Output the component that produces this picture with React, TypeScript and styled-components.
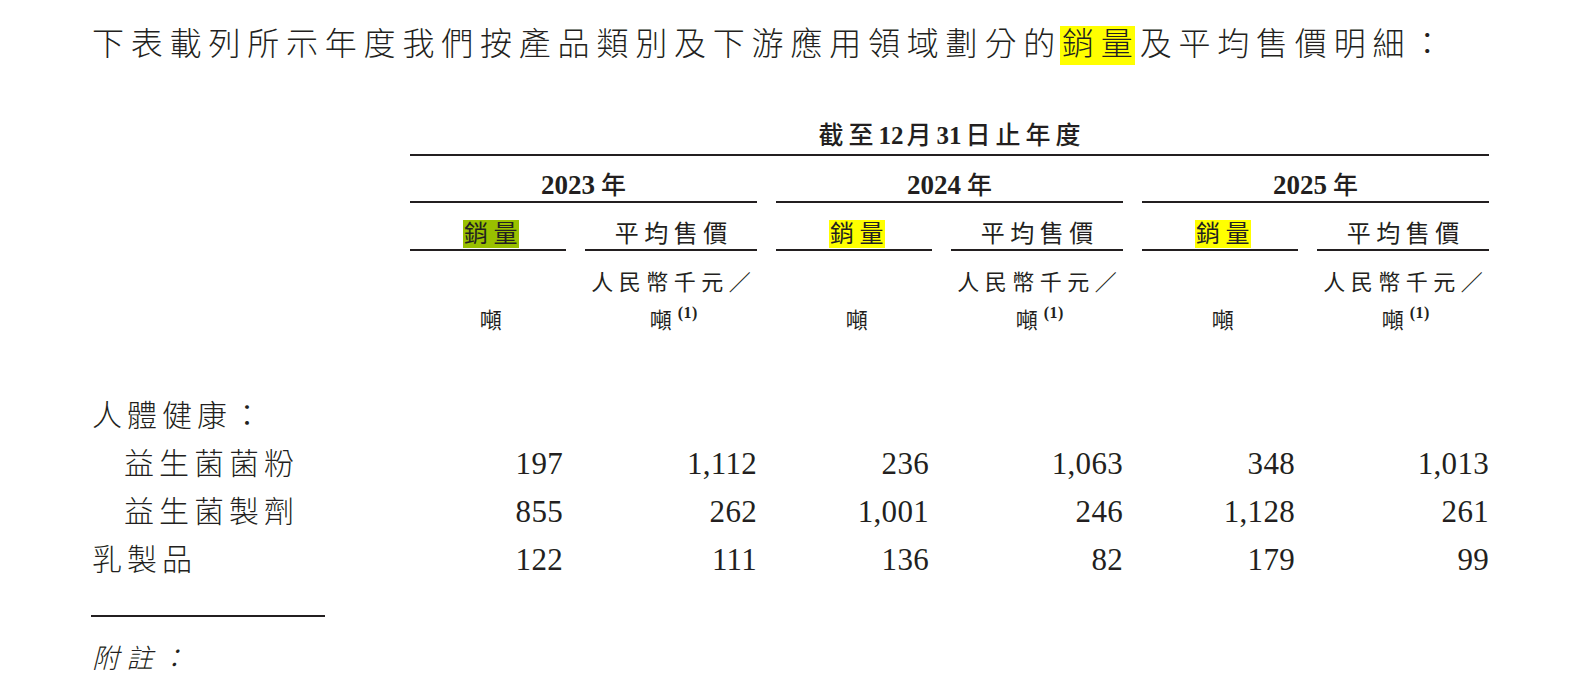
import React from "react";
import styled, { createGlobalStyle } from "styled-components";

const Global = createGlobalStyle`
  html, body { margin: 0; padding: 0; background: #ffffff; }
  body { font-family: "Liberation Serif", "Noto Sans CJK TC", serif; color: #231f20; }
`;

const Page = styled.div`
  padding: 24px 0 0 92px;
  font-family: "Liberation Serif", "Noto Sans CJK TC", serif;
  color: #231f20;
`;

const Intro = styled.p`
  margin: 0;
  font-size: 32px;
  line-height: 40px;
  letter-spacing: 6.8px;
  font-weight: 300;
  white-space: nowrap;
`;

const Mark = styled.span<{ $color: string; $gap: number }>`
  background: ${(p) => p.$color};
  padding: 0 2px 3px 2px;
  margin: 0 ${(p) => p.$gap - 2}px 0 -2px;
`;

const Tight = styled.span`
  letter-spacing: 0;
`;

const Bold = styled.span<{ $size: number; $after: number }>`
  font-weight: 700;
  font-size: ${(p) => p.$size}px;
  letter-spacing: 0;
  margin-right: ${(p) => p.$after}px;
`;

const Table = styled.div`
  display: grid;
  grid-template-columns: 299px 156px 172px 156px 172px 156px 172px;
  column-gap: 19px;
  margin-top: 57px;
`;

const SpanHead = styled.div`
  grid-column: 2 / 8;
  text-align: center;
  font-size: 25px;
  font-weight: 500;
  line-height: 30px;
  letter-spacing: 5px;
  padding-bottom: 3px;
  padding-left: 5px;
  border-bottom: 2px solid #231f20;
`;

const YearHead = styled.div<{ $start?: number }>`
  grid-column: ${(p) => (p.$start ? `${p.$start} / span 2` : "span 2")};
  text-align: center;
  font-size: 25px;
  font-weight: 500;
  line-height: 30px;
  padding-top: 14px;
  border-bottom: 2px solid #231f20;
`;

const SubHead = styled.div<{ $start?: number }>`
  grid-column: ${(p) => (p.$start ? p.$start : "auto")};
  text-align: center;
  font-size: 24px;
  font-weight: 400;
  line-height: 30px;
  letter-spacing: 5.5px;
  padding-top: 16px;
  padding-left: 5.5px;
  border-bottom: 2px solid #231f20;
`;

const SubMark = styled.span<{ $color: string }>`
  background: ${(p) => p.$color};
  padding: 1px 1px 1px 1px;
`;

const Unit = styled.div<{ $bottom?: boolean; $start?: number }>`
  grid-column: ${(p) => (p.$start ? p.$start : "auto")};
  text-align: center;
  font-size: 22px;
  line-height: 38px;
  letter-spacing: 5.5px;
  padding-top: 13px;
  padding-left: 5.5px;
  align-self: ${(p) => (p.$bottom ? "end" : "start")};
  white-space: nowrap;
`;

const Ton = styled.span`
  font-size: 22px;
  letter-spacing: 0;
`;

const Sup = styled.sup`
  font-size: 16px;
  font-weight: 700;
  line-height: 0;
  letter-spacing: 0.5px;
  margin-left: 6px;
  vertical-align: 10px;
`;

const Label = styled.div<{ $indent?: boolean; $first?: boolean }>`
  grid-column: 1;
  font-size: 30px;
  line-height: 48px;
  letter-spacing: 5px;
  font-weight: 300;
  padding-left: ${(p) => (p.$indent ? 32 : 0)}px;
  margin-top: ${(p) => (p.$first ? 52 : 0)}px;
  white-space: nowrap;
`;

const Num = styled.div<{ $sales?: boolean }>`
  text-align: right;
  font-size: 31px;
  line-height: 48px;
  letter-spacing: 0.3px;
  padding-right: ${(p) => (p.$sales ? 3 : 0)}px;
`;

const FootRule = styled.div`
  width: 234px;
  height: 2px;
  background: #231f20;
  margin-top: 31px;
  margin-left: -1px;
`;

const Note = styled.p`
  margin: 22px 0 0 0;
  font-size: 27px;
  line-height: 40px;
  letter-spacing: 7px;
  font-style: italic;
  font-weight: 300;
`;

const YELLOW = "#ffff00";
const GREEN = "#99c000";

const years = ["2023", "2024", "2025"];

const rows: { label: string; indent?: boolean; values: string[] }[] = [
  { label: "益生菌菌粉", indent: true, values: ["197", "1,112", "236", "1,063", "348", "1,013"] },
  { label: "益生菌製劑", indent: true, values: ["855", "262", "1,001", "246", "1,128", "261"] },
  { label: "乳製品", values: ["122", "111", "136", "82", "179", "99"] },
];

export default function App() {
  return (
    <>
      <Global />
      <Page>
        <Intro>
          下表載列所示年度我們按產品類別及下游應用領域劃分的
          <Mark $color={YELLOW} $gap={6.8}>
            銷<Tight>量</Tight>
          </Mark>
          及平均售價明細：
        </Intro>
        <Table>
          <SpanHead>
            截至<Bold $size={25} $after={3}>12</Bold>月<Bold $size={25} $after={4}>31</Bold>日止年度
          </SpanHead>
          {years.map((y, i) => (
            <YearHead key={y} $start={i === 0 ? 2 : undefined}>
              <Bold $size={27} $after={6}>{y}</Bold>年
            </YearHead>
          ))}
          {years.map((y, i) => (
            <React.Fragment key={"s" + y}>
              <SubHead $start={i === 0 ? 2 : undefined}>
                <SubMark $color={i === 0 ? GREEN : YELLOW}>
                  銷<Tight>量</Tight>
                </SubMark>
              </SubHead>
              <SubHead>平均售價</SubHead>
            </React.Fragment>
          ))}
          {years.map((y, i) => (
            <React.Fragment key={"u" + y}>
              <Unit $bottom $start={i === 0 ? 2 : undefined}>
                <Ton>噸</Ton>
              </Unit>
              <Unit>
                人民幣千元／
                <br />
                <Ton>噸</Ton>
                <Sup>(1)</Sup>
              </Unit>
            </React.Fragment>
          ))}
          <Label $first>人體健康：</Label>
          {rows.map((r) => (
            <React.Fragment key={r.label}>
              <Label $indent={r.indent}>{r.label}</Label>
              {r.values.map((v, i) => (
                <Num key={i} $sales={i % 2 === 0}>
                  {v}
                </Num>
              ))}
            </React.Fragment>
          ))}
        </Table>
        <FootRule />
        <Note>附註：</Note>
      </Page>
    </>
  );
}
